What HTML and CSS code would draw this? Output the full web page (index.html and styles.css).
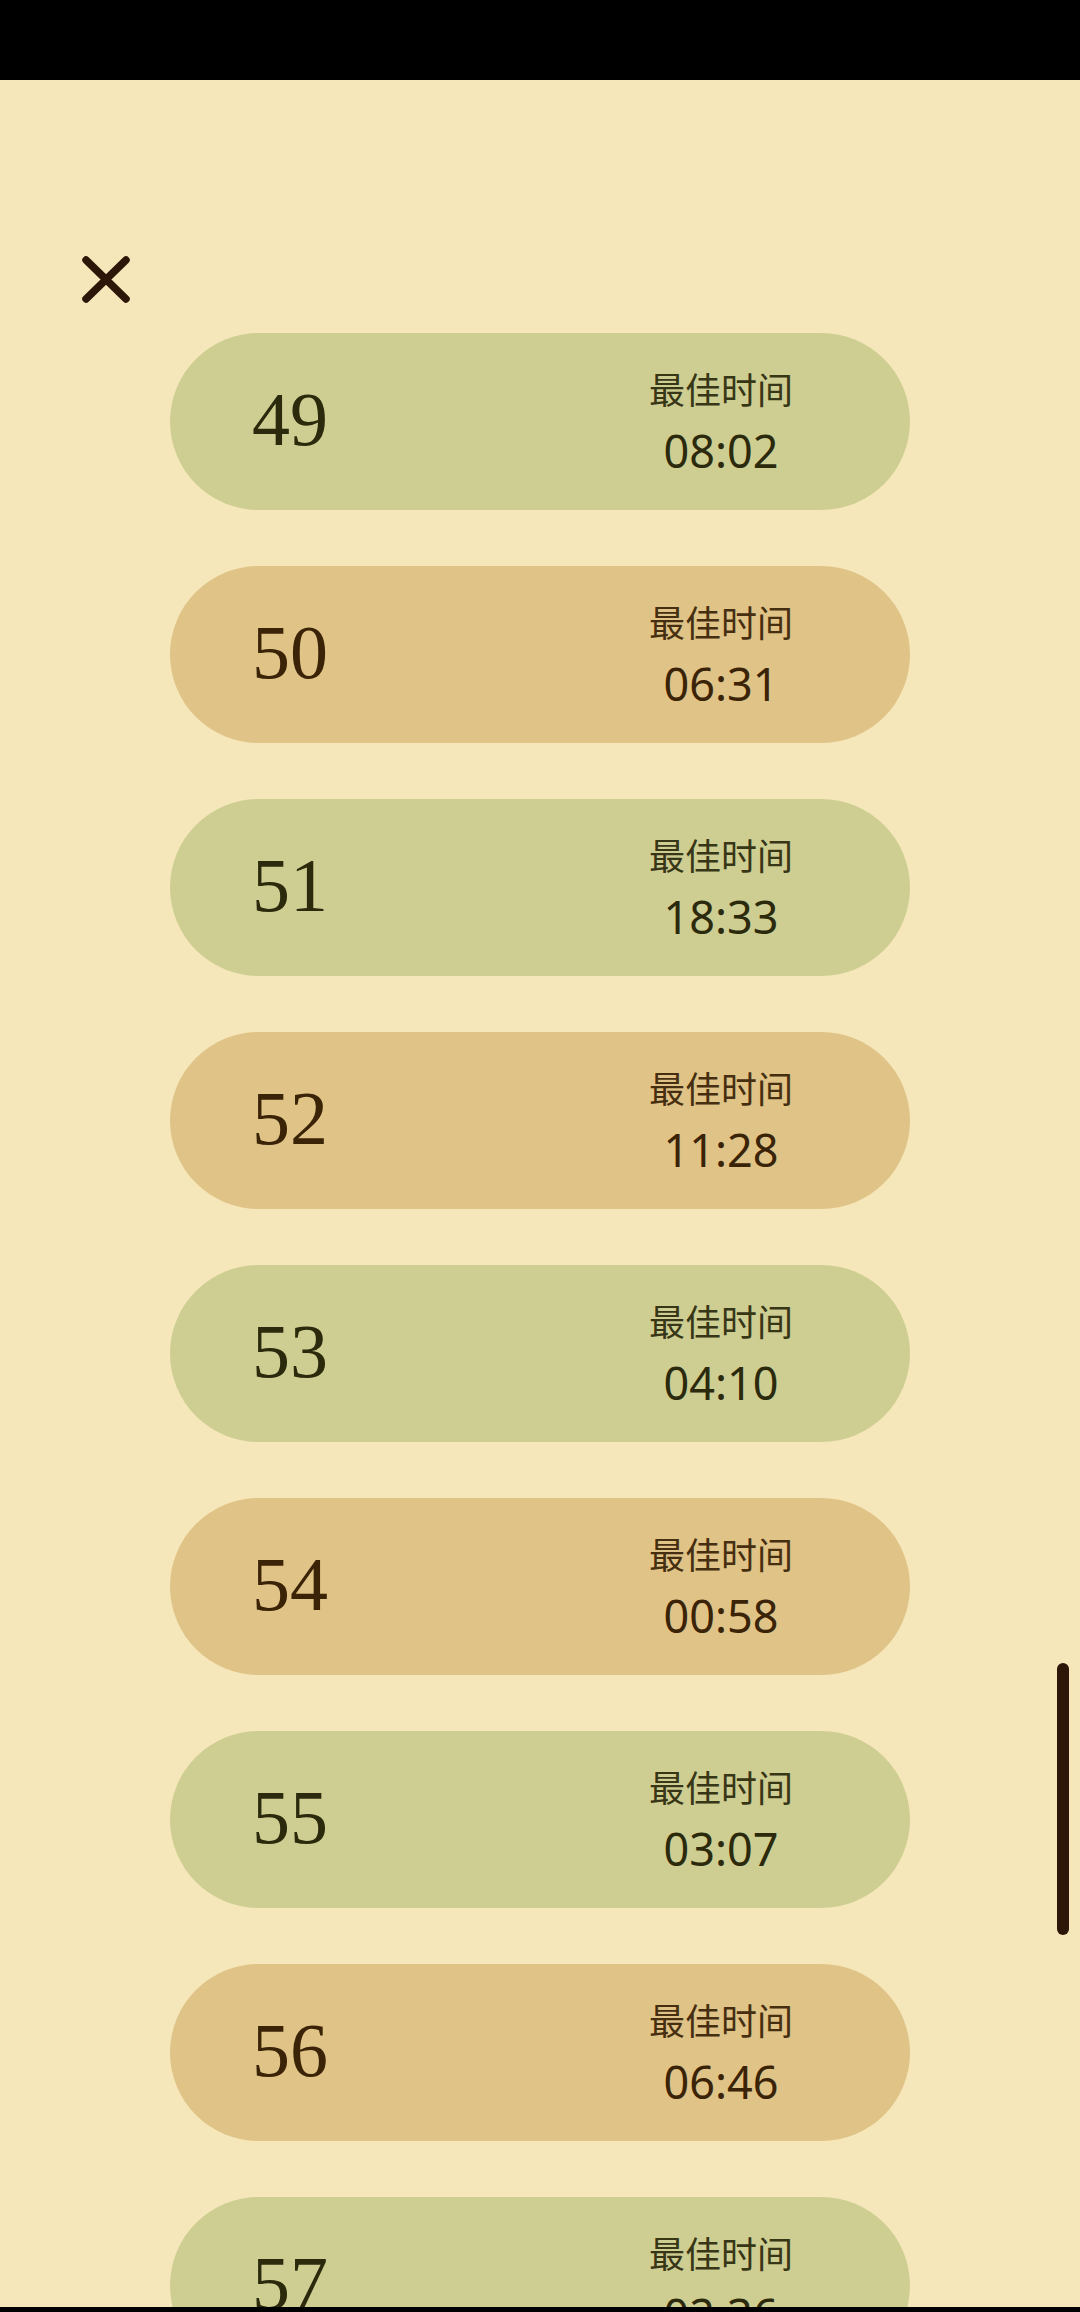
FILE: index.html
```html
<!DOCTYPE html>
<html lang="zh">
<head>
<meta charset="utf-8">
<title>最佳时间</title>
<link rel="stylesheet" href="styles.css">
</head>
<body>
<div class="screen">
  <div class="status-bar"></div>
  <div class="content">
    <div class="toolbar">
      <svg class="close" viewBox="0 0 48 48" width="48" height="48" aria-label="关闭">
        <path d="M4 4 L44 43 M44 4 L4 43" stroke="#2b1608" stroke-width="7.5" stroke-linecap="round" fill="none"/>
      </svg>
    </div>
    <div class="list">
      <div class="card green"><span class="num">49</span><div class="best"><span class="label">最佳时间</span><span class="time">08:02</span></div></div>
      <div class="card tan"><span class="num">50</span><div class="best"><span class="label">最佳时间</span><span class="time">06:31</span></div></div>
      <div class="card green"><span class="num">51</span><div class="best"><span class="label">最佳时间</span><span class="time">18:33</span></div></div>
      <div class="card tan"><span class="num">52</span><div class="best"><span class="label">最佳时间</span><span class="time">11:28</span></div></div>
      <div class="card green"><span class="num">53</span><div class="best"><span class="label">最佳时间</span><span class="time">04:10</span></div></div>
      <div class="card tan"><span class="num">54</span><div class="best"><span class="label">最佳时间</span><span class="time">00:58</span></div></div>
      <div class="card green"><span class="num">55</span><div class="best"><span class="label">最佳时间</span><span class="time">03:07</span></div></div>
      <div class="card tan"><span class="num">56</span><div class="best"><span class="label">最佳时间</span><span class="time">06:46</span></div></div>
      <div class="card green"><span class="num">57</span><div class="best"><span class="label">最佳时间</span><span class="time">02:36</span></div></div>
    </div>
    <div class="scrollbar"></div>
  </div>
  <div class="nav-bar"></div>
</div>
</body>
</html>
```
FILE: styles.css
```css
* { box-sizing: border-box; }
html, body { margin: 0; padding: 0; }
body {
  background: #f5e7ba;
  font-family: "Noto Sans", "Noto Sans CJK SC", sans-serif;
}
.screen {
  width: 1080px;
  height: 2312px;
  display: flex;
  flex-direction: column;
  overflow: hidden;
  background: #f5e7ba;
}
.status-bar {
  height: 80px;
  flex: none;
  background: #000;
}
.content {
  flex: 1;
  position: relative;
  overflow: hidden;
  padding-top: 176px;
}
.toolbar {
  position: absolute;
  left: 82px;
  top: 176px;
  width: 48px;
  height: 48px;
}
.close { display: block; }
.list {
  display: flex;
  flex-direction: column;
  gap: 56px;
  padding-top: 77px;
  padding-left: 170px;
}
.card {
  width: 740px;
  height: 177px;
  flex: none;
  border-radius: 88.5px;
  display: flex;
  align-items: center;
  justify-content: space-between;
  padding-left: 82px;
  padding-right: 89px;
}
.card.green { background: #cfce92; color: #2b2a0c; }
.card.tan { background: #e0c386; color: #3a2306; }
.num {
  font-family: "Liberation Serif", serif;
  font-size: 76px;
  line-height: 1;
  margin-top: -6px;
}
.best {
  width: 200px;
  display: flex;
  flex-direction: column;
  align-items: center;
}
.label {
  font-family: "Noto Sans CJK SC", sans-serif;
  font-size: 36px;
  line-height: 44px;
  opacity: 0.92;
}
.time {
  font-family: "Noto Sans", sans-serif;
  font-size: 45px;
  line-height: 54px;
  margin-top: 14px;
}
.scrollbar {
  position: absolute;
  left: 1057px;
  top: 1583px;
  width: 12px;
  height: 272px;
  border-radius: 6px;
  background: #2b1608;
}
.nav-bar {
  height: 5px;
  flex: none;
  background: #000;
}
```
